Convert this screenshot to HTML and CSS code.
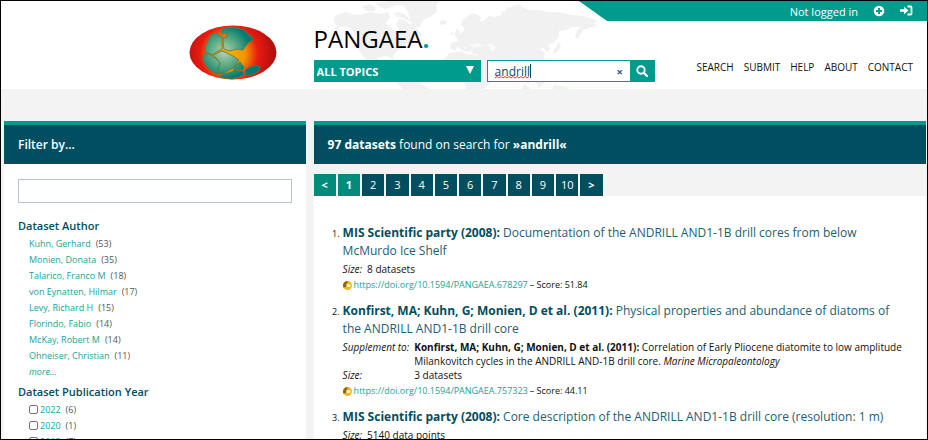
FILE: index.html
```html
<!DOCTYPE html>
<html lang="en">
<head>
<meta charset="utf-8">
<title>PANGAEA – Search results</title>
<link rel="stylesheet" href="styles.css">
</head>
<body>
<div class="page">
  <header class="header columns">
    <svg class="map" viewBox="325 1 285 88" aria-hidden="true">
      <path d="M333 20L336 15 345 12 354 15 363 14 370 12 380 14 388 12 390 17 386 22 388 27 394 30 397 33 399 29 396 24 399 19 405 20 409 24 413 23 418 30 422 35 416 38 412 42 406 44 402 48 396 52 393 56 394 61 390 57 385 56 377 58 377 64 382 66 387 64 388 69 393 74 398 75 404 75 412 78 420 83 430 89H403L397 83 395 77 388 73 380 70 373 67 367 60 361 54 357 46 358 37 353 31 347 26 340 27 335 31 337 26Z"/>
      <path d="M362 6L369 4 376 7 374 11 366 11ZM376 3L388 1H399L394 6 386 9 380 7ZM393 13L400 12 408 17 410 22 404 18 397 17ZM392 1H440L436 5 437 12 430 17 423 20 419 28 414 26 410 20 408 12 404 6 395 5ZM439 22L443 20 447 21 446 24 441 25Z"/>
      <path d="M450 48L451 42 457 42 457 38 454 36 461 34 464 30 464 27 461 25 463 20 468 16 473 13 478 15 482 18 479 20 483 21 489 16 495 17 502 15 501 11 505 12 507 8 514 6 520 4 522 7 529 10 538 10 548 12 559 12 571 15 584 16 598 21 594 23 597 26 589 28 583 30 578 39 575 38 577 30 581 27 572 27 566 30 559 31 559 37 553 43 549 44 550 49 547 52 544 48 540 49 545 53 544 59 539 64 532 66 534 72 530 75 527 71 527 79 530 85 525 81 523 72 519 67 514 68 508 76 504 68 499 63 493 63 489 61 487 61 493 65 498 66 494 72 485 76 481 68 477 59 478 54 473 54 471 50 467 53 465 47 462 46 468 52 463 51 458 47 455 51ZM454 35L457 28 460 32 461 35ZM450 34L453 31 453 35Z"/>
      <path d="M449 53L462 51 466 54 477 55 483 67 488 76 494 76 491 82 484 89H466L463 79 458 75 448 75 442 69 442 62ZM553 51L557 46 558 42 561 45 559 50 554 54ZM524 84L531 89H522ZM535 81L543 77 545 83 539 88ZM554 85L566 87 568 89H553ZM544 69L548 73 547 77 544 74Z"/>
      <path d="M487 45L492 43 496 47 494 52 491 50ZM470 45L478 43 483 46 474 48Z" fill="#f9f9f9"/>
    </svg>
    <div class="userbar">
      <span>Not logged in</span>
      <a href="#signup" aria-label="Sign up"><svg width="12" height="12" viewBox="0 0 12 12"><circle cx="6" cy="6" r="5.3" fill="#fff"/><path d="M6 3v6M3 6h6" stroke="#009b8d" stroke-width="2"/></svg></a>
      <a href="#login" aria-label="Log in"><svg width="13" height="12" viewBox="0 0 13 12"><path d="M7.500 1.500H10.500Q11.500 1.500 11.500 2.500V8.500Q11.500 9.500 10.500 9.500H7.500" fill="none" stroke="#fff" stroke-width="1.800"/><path d="M0 4.200h4V1.800L8.500 5.500 4 9.200V6.800H0z" fill="#fff"/></svg></a>
    </div>
    <a class="logo" href="#home" aria-label="PANGAEA home">
      <svg width="88" height="55" viewBox="0 0 88 55">
        <defs>
          <radialGradient id="sea" gradientUnits="userSpaceOnUse" cx="40" cy="29" r="44"><stop offset="0" stop-color="#f6b000"/><stop offset=".38" stop-color="#f39200"/><stop offset=".66" stop-color="#e81c10"/><stop offset="1" stop-color="#b50f10"/></radialGradient>
          <radialGradient id="land" gradientUnits="userSpaceOnUse" cx="35" cy="27" r="27"><stop offset="0" stop-color="#b4d2ba"/><stop offset=".5" stop-color="#5eab85"/><stop offset="1" stop-color="#067a70"/></radialGradient>
        </defs>
        <ellipse cx="44" cy="27.500" rx="43.500" ry="27" fill="url(#sea)"/>
        <g fill="url(#land)" stroke="#5a7a48" stroke-width=".8" stroke-linejoin="round">
          <path d="M32 5L38 2 48 3 55 5 59 9 63 12 64 15 59 18 56 22 54 25 48 24 41 26 35 24 34 17 34 13 38 12 37 8 33 9Z"/>
          <path d="M33 11V24L27 27 24 30 18 28 16 25 17 20 20 14 23 9 28 8 30 11Z"/>
          <path d="M15 29L20 29 24 32 29 35 31 38 29 43 30 50 24 47 18 42 14 35Z"/>
          <path d="M24 30L33 26 38 28 44 31 50 35 47 39 45 43 40 45 36 48 31 49 29 44 31 38 29 35Z"/>
          <path d="M47 40L51 37 55 42 54 45 49 45 44 47Z"/>
          <path d="M30 51L39 48 45 46 54 46 55 50 50 52 43 54 35 53Z"/>
          <path d="M56 45L61 42 67 40 71 42 70 46 65 49 59 51 56 49Z"/>
        </g>
      </svg>
    </a>
    <div class="masthead">
      <div class="brand">PANGAEA<span class="dot">.</span></div>
      <div class="tools">
        <form class="search" onsubmit="return false">
          <label class="topics"><span class="hidden">Topic</span>
            <select><option>ALL TOPICS</option></select>
            <svg class="arrow" width="8" height="8" viewBox="0 0 8 8"><path d="M0 0h8L4 8z" fill="#fff"/></svg>
          </label>
          <div class="box">
            <label class="hidden" for="q">Search</label>
            <span class="entry"><input id="q" type="text" value="andrill" autocomplete="off">
              <svg class="squiggle" width="34" height="3" viewBox="0 0 34 3"><path d="M0 2l2-1.500 2 1.500 2-1.500 2 1.500 2-1.500 2 1.500 2-1.500 2 1.500 2-1.500 2 1.500 2-1.500 2 1.500 2-1.500 2 1.500 2-1.500 2 1.500 2-1.500" fill="none" stroke="#f03b3b"/></svg>
              <i class="caret"></i>
            </span>
            <button class="clear" type="button" aria-label="Clear">×</button>
            <button class="go" type="submit" aria-label="Search"><svg width="12" height="12" viewBox="0 0 12 12"><circle cx="5" cy="5" r="3.700" fill="none" stroke="#fff" stroke-width="1.900"/><path d="M8 8l3 3" stroke="#fff" stroke-width="2.200" stroke-linecap="round"/></svg></button>
          </div>
        </form>
        <nav class="nav"><a href="#search">SEARCH</a><a href="#submit">SUBMIT</a><a href="#help">HELP</a><a href="#about">ABOUT</a><a href="#contact">CONTACT</a></nav>
      </div>
    </div>
  </header>
  <div class="content columns">
    <aside class="filters">
      <h2 class="bar">Filter by...</h2>
      <div class="filter-body">
        <input class="filter-input" type="text" aria-label="Filter by">
        <h3>Dataset Author</h3>
        <ul>
          <li><a href="#a1">Kuhn, Gerhard</a><span>(53)</span></li>
          <li><a href="#a2">Monien, Donata</a><span>(35)</span></li>
          <li><a href="#a3">Talarico, Franco M</a><span>(18)</span></li>
          <li><a href="#a4">von Eynatten, Hilmar</a><span>(17)</span></li>
          <li><a href="#a5">Levy, Richard H</a><span>(15)</span></li>
          <li><a href="#a6">Florindo, Fabio</a><span>(14)</span></li>
          <li><a href="#a7">McKay, Robert M</a><span>(14)</span></li>
          <li><a href="#a8">Ohneiser, Christian</a><span>(11)</span></li>
          <li><a href="#more"><em>more...</em></a></li>
        </ul>
        <h3>Dataset Publication Year</h3>
        <ul>
          <li><input type="checkbox" id="y22"><label for="y22">2022</label><span>(6)</span></li>
          <li><input type="checkbox" id="y20"><label for="y20">2020</label><span>(1)</span></li>
          <li><input type="checkbox" id="y19"><label for="y19">2019</label><span>(7)</span></li>
        </ul>
      </div>
    </aside>
    <main class="main">
      <h1 class="bar"><b>97 datasets</b> found on search for <b>»andrill«</b></h1>
      <nav class="pages" aria-label="Pages"><a class="on" href="#prev">&lt;</a><a class="on" href="#p1">1</a><a href="#p2">2</a><a href="#p3">3</a><a href="#p4">4</a><a href="#p5">5</a><a href="#p6">6</a><a href="#p7">7</a><a href="#p8">8</a><a href="#p9">9</a><a href="#p10">10</a><a class="next" href="#next">&gt;</a></nav>
      <ol class="results">
        <li>
          <a class="title" href="#r1"><b>MIS Scientific party (2008):</b> Documentation of the ANDRILL AND1-1B drill cores from below McMurdo Ice Shelf</a>
          <dl><dt>Size:</dt><dd>8 datasets</dd></dl>
          <p class="doi"><svg width="9" height="9" viewBox="0 0 9 9"><circle cx="4.500" cy="4.500" r="4.500" fill="#fcb426"/><path d="M4.500 0a4.500 4.500 0 0 0-4 6.500L3 6V3l1.500-1z" fill="#8a6420"/><path d="M4 3h2a1.500 1.500 0 0 1 0 3H4z" fill="#fff3d6"/></svg><a href="#d1">https://doi.org/10.1594/PANGAEA.678297</a> – Score: 51.84</p>
        </li>
        <li>
          <a class="title" href="#r2"><b>Konfirst, MA; Kuhn, G; Monien, D et al. (2011):</b> Physical properties and abundance of diatoms of the ANDRILL AND1-1B drill core</a>
          <dl><dt>Supplement to:</dt><dd><b>Konfirst, MA; Kuhn, G; Monien, D et al. (2011):</b> Correlation of Early Pliocene diatomite to low amplitude Milankovitch cycles in the ANDRILL AND-1B drill core. <em>Marine Micropaleontology</em></dd><dt>Size:</dt><dd>3 datasets</dd></dl>
          <p class="doi"><svg width="9" height="9" viewBox="0 0 9 9"><circle cx="4.500" cy="4.500" r="4.500" fill="#fcb426"/><path d="M4.500 0a4.500 4.500 0 0 0-4 6.500L3 6V3l1.500-1z" fill="#8a6420"/><path d="M4 3h2a1.500 1.500 0 0 1 0 3H4z" fill="#fff3d6"/></svg><a href="#d2">https://doi.org/10.1594/PANGAEA.757323</a> – Score: 44.11</p>
        </li>
        <li>
          <a class="title" href="#r3"><b>MIS Scientific party (2008):</b> Core description of the ANDRILL AND1-1B drill core (resolution: 1 m)</a>
          <dl><dt>Size:</dt><dd>5140 data points</dd></dl>
        </li>
      </ol>
    </main>
  </div>
</div>
</body>
</html>
```
FILE: styles.css
```css
* { box-sizing: border-box; }
body { margin: 0; font-family: "Open Sans", sans-serif; font-size: 10px; color: #111; background: #f3f3f3; }
a { color: inherit; text-decoration: none; }
input, select, button { font: inherit; color: inherit; margin: 0; padding: 0; border: 0; border-radius: 0; background: none; }
h1, h2, h3, ul, ol, dl, dd, p { margin: 0; padding: 0; }
ul { list-style: none; }
svg { display: block; flex: none; }
.hidden { position: absolute; width: 1px; height: 1px; overflow: hidden; clip-path: inset(50%); }

.page { height: 100vh; border: 1px solid #000; overflow: hidden; }
.columns { display: grid; grid-template-columns: 33fr 67fr; column-gap: 8px; }
.columns > * { min-width: 0; }

.header { position: relative; height: 88px; padding: 0 1px 0 3px; background: #fff; }
.map { position: absolute; left: 35%; top: 0; width: 285px; height: 88px; fill: #f1f1f1; }
.userbar { position: absolute; top: 0; right: 0; width: 348px; height: 20px; padding-right: 14px; display: flex; align-items: center; justify-content: flex-end; gap: 15px; background: #009b8d; color: #fff; font-size: 11px; clip-path: polygon(0 0, 100% 0, 100% 100%, 28px 100%); }
.logo { justify-self: end; padding: 24px 29px 0 0; }
.masthead { position: relative; padding-top: 23px; }
.brand { font-size: 24px; line-height: 30px; font-weight: 500; color: #000; }
.dot { color: #009b8d; font-weight: 700; }
.tools { display: flex; align-items: center; justify-content: space-between; margin-top: 6px; padding-right: 13px; }
.search { display: flex; gap: 6px; height: 22px; }
.topics { position: relative; width: 167px; }
.topics select { width: 100%; height: 22px; padding-left: 3px; appearance: none; background: #009b8d; color: #fff; font-size: 11px; font-weight: 700; }
.arrow { position: absolute; right: 7px; top: 6px; pointer-events: none; }
.box { display: flex; width: 168px; border: 1px solid #009b8d; background: #fff; }
.entry { position: relative; flex: 1; min-width: 0; }
.entry input { width: 100%; height: 20px; padding-left: 7px; color: #004e60; font-size: 12px; outline: 0; }
.squiggle { position: absolute; left: 7px; bottom: 2px; }
.caret { position: absolute; left: 42px; top: 3px; width: 1px; height: 14px; background: #004e60; }
.clear { width: 20px; color: #1f4f9a; font-weight: 700; font-size: 11px; }
.go { display: flex; align-items: center; justify-content: center; width: 24px; background: #009b8d; }
.nav { display: flex; gap: 10px; margin-top: -8px; }

.content { padding: 32px 1px 0 3px; }
.bar { height: 43px; padding-left: 14px; border-top: 4px solid #009b8d; background: #004e60; color: #fff; font-size: 12px; line-height: 39px; font-weight: 500; }
h2.bar { font-weight: 600; }
.filters { background: #fff; }
.filter-body { padding: 15px 14px; }
.filter-input { display: block; width: 100%; height: 24px; border: 1px solid #b8c3cb; }
.filter-body h3 { margin-top: 15px; color: #004e60; font-size: 11px; line-height: 16px; font-weight: 600; }
.filter-body ul { margin-top: 1px; }
.filter-body ul + h3 { margin-top: 5px; }
.filter-body li { display: flex; align-items: center; height: 16px; padding-left: 11px; font-size: 9px; color: #1aa397; }
.filter-body li span { margin-left: 5px; color: #555; }
.filter-body input[type="checkbox"] { appearance: none; width: 9px; height: 9px; margin-right: 2px; border: 1px solid #777; border-radius: 2px; }

.pages { display: flex; gap: 2px; width: 289px; margin-top: 10px; color: #fff; font-size: 11px; line-height: 22px; text-align: center; }
.pages a { flex: 1 1 0; background: #004e60; }
.pages .on { background: #008b7a; font-weight: 700; }
.pages .next { font-weight: 700; }
.results { list-style: none; counter-reset: item; padding: 28px 22px 40px 29px; background: #fff; }
.results li { position: relative; counter-increment: item; margin-bottom: 10px; }
.results li::before { content: counter(item) "."; position: absolute; right: 100%; top: 3px; margin-right: 3px; font-size: 9px; line-height: 14px; }
.title { display: block; color: #1b6072; font-size: 12px; line-height: 18px; }
.title b { color: #004e60; }
.results dl { display: grid; grid-template-columns: max-content 1fr; column-gap: 5px; margin-top: 2px; line-height: 14px; }
.results dt { font-style: italic; }
.doi { display: flex; align-items: center; gap: 2px; margin-top: 2px; font-size: 9px; line-height: 14px; }
.doi a { color: #1aa397; }
```
